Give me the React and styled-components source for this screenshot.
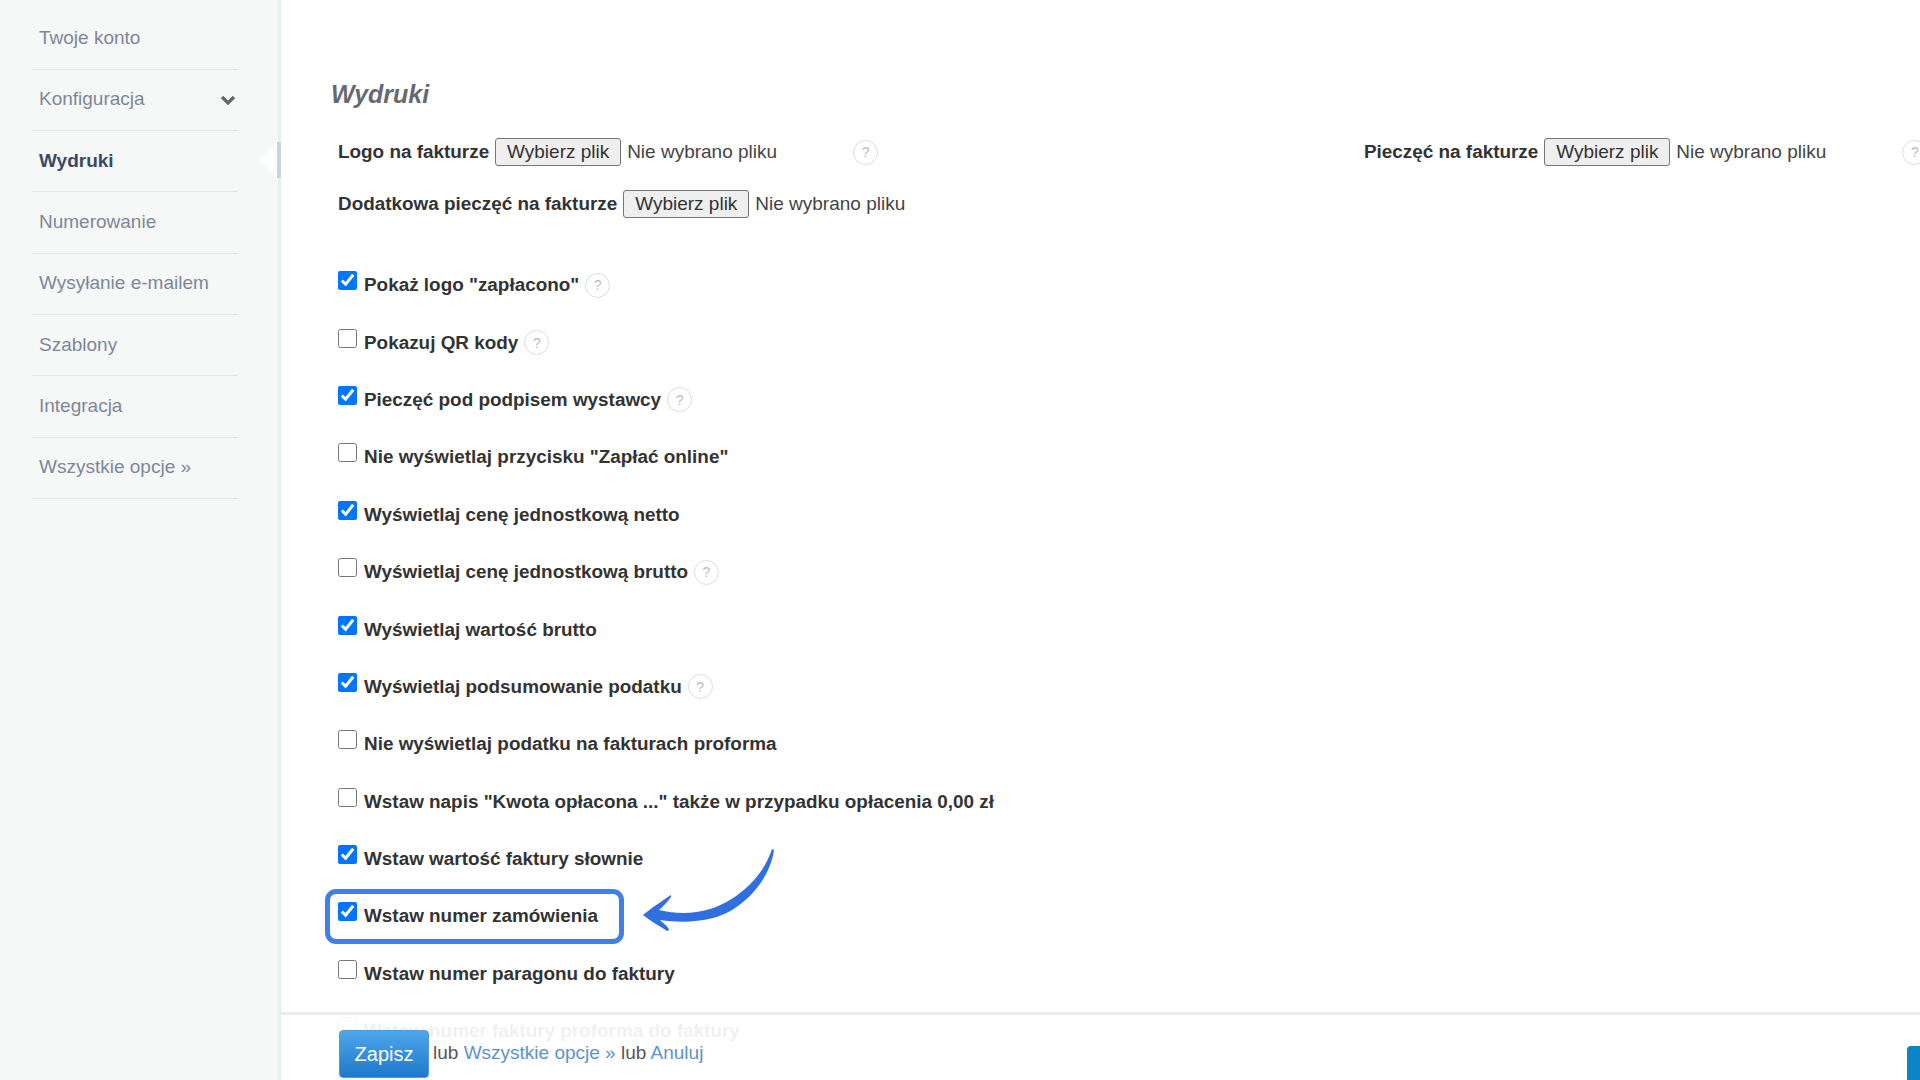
import styled, { createGlobalStyle } from 'styled-components';

const menuItems = [
    { label: 'Twoje konto' },
    { label: 'Konfiguracja', expandable: true },
    { label: 'Wydruki', active: true },
    { label: 'Numerowanie' },
    { label: 'Wysyłanie e-mailem' },
    { label: 'Szablony' },
    { label: 'Integracja' },
    { label: 'Wszystkie opcje »' },
];

const options = [
    { label: 'Pokaż logo "zapłacono"', checked: true, help: true },
    { label: 'Pokazuj QR kody', help: true },
    { label: 'Pieczęć pod podpisem wystawcy', checked: true, help: true },
    { label: 'Nie wyświetlaj przycisku "Zapłać online"' },
    { label: 'Wyświetlaj cenę jednostkową netto', checked: true },
    { label: 'Wyświetlaj cenę jednostkową brutto', help: true },
    { label: 'Wyświetlaj wartość brutto', checked: true },
    { label: 'Wyświetlaj podsumowanie podatku', checked: true, help: true },
    { label: 'Nie wyświetlaj podatku na fakturach proforma' },
    { label: 'Wstaw napis "Kwota opłacona ..." także w przypadku opłacenia 0,00 zł' },
    { label: 'Wstaw wartość faktury słownie', checked: true },
    { label: 'Wstaw numer zamówienia', checked: true, marked: true },
    { label: 'Wstaw numer paragonu do faktury' },
    { label: 'Wstaw numer faktury proforma do faktury' },
];

function FileField({ label, help }) {
    return (
        <FileRow>
            <FileLabel>{label}</FileLabel>
            <FileButton type="button">Wybierz plik</FileButton>
            <FileName>Nie wybrano pliku</FileName>
            {help && <Help>?</Help>}
        </FileRow>
    );
}

function App() {
    return (
        <Page>
            <GlobalStyle />
            <Sidebar>
                {menuItems.map((item) => (
                    <MenuItem key={item.label} $active={item.active}>
                        {item.label}
                        {item.expandable && (
                            <Chevron viewBox="0 0 16 11">
                                <path d="M2 2l6 6 6-6" fill="none" stroke="#666" strokeWidth="3.2" />
                            </Chevron>
                        )}
                    </MenuItem>
                ))}
            </Sidebar>
            <Main>
                <Title>Wydruki</Title>
                <FileGrid>
                    <FileField label="Logo na fakturze" help />
                    <FileField label="Pieczęć na fakturze" help />
                    <FileField label="Dodatkowa pieczęć na fakturze" />
                </FileGrid>
                <Options>
                    {options.map((option) => (
                        <Option key={option.label} $marked={option.marked}>
                            <Check type="checkbox" defaultChecked={option.checked} />
                            <OptionLabel>{option.label}</OptionLabel>
                            {option.help && <OptionHelp>?</OptionHelp>}
                            {option.marked && (
                                <Arrow viewBox="0 0 140 90">
                                    <path
                                        d="M134 4L136 5C132 35 105 65 75 73C55 78 38 77 22 75C25 78 30 81 31 85L29 86C22 81 12 76 5 70C12 64 24 56 33 50L33 52C30 56 26 61 21 65C38 69 55 69 72 64C100 55 125 32 134 4Z"
                                        fill="#2f6fdf"
                                    />
                                </Arrow>
                            )}
                        </Option>
                    ))}
                </Options>
                <Footer>
                    <SaveButton type="button">Zapisz</SaveButton>
                    <FooterText>
                        lub <FooterLink>Wszystkie opcje »</FooterLink> lub <FooterLink>Anuluj</FooterLink>
                    </FooterText>
                    <CornerButton />
                </Footer>
            </Main>
        </Page>
    );
}

const GlobalStyle = createGlobalStyle`
    html, body {
        margin : 0;
        height : 100%;
        overflow : hidden;
        background-color : white;
        font-family : "Liberation Sans", Arial, sans-serif;
    }
`;

const Page = styled.div`
    display : flex;

    height : 1080px;
    overflow : hidden;
`;

const Sidebar = styled.nav`
    flex : none;
    box-sizing : border-box;

    width : 281px;
    padding-top : 8.5px;
    padding-left : 32px;
    padding-right : 40px;

    background-color : #f6f7f7;
    border-right : 3px solid #e9eeee;
`;

const MenuItem = styled.div`
    position : relative;
    display : flex;
    align-items : center;
    justify-content : space-between;
    box-sizing : border-box;

    height : 61.3px;
    padding-left : 7px;
    padding-bottom : 1px;

    font-size : 19px;
    font-weight : ${(props) => (props.$active ? 700 : 400)};
    color : ${(props) => (props.$active ? '#3a4a5e' : '#7d8799')};

    border-bottom : 1px solid #e3e5e6;

    ${(props) => props.$active && `
        &::before {
            content : "";
            position : absolute;
            top : 11px;
            right : -39px;

            border-top : 18px solid transparent;
            border-bottom : 18px solid transparent;
            border-right : 17px solid white;
        }

        &::after {
            content : "";
            position : absolute;
            top : 11px;
            right : -43px;

            width : 4px;
            height : 36px;

            background-color : #c6d6e1;
        }
    `}
`;

const Chevron = styled.svg`
    width : 16px;
    height : 11px;
    margin-top : 3px;
    margin-right : 2px;
`;

const Main = styled.main`
    position : relative;
    flex : 1;
    min-width : 0;

    padding-top : 80px;
    padding-left : 50px;
`;

const Title = styled.h1`
    margin : 0;

    font-size : 25px;
    line-height : 29px;
    font-weight : 700;
    font-style : italic;
    color : #666a70;
`;

const FileGrid = styled.div`
    display : grid;
    grid-template-columns : 1026px 1fr;
    row-gap : 24px;

    margin-top : 29px;
    padding-left : 7px;
`;

const FileRow = styled.div`
    display : flex;
    align-items : center;

    height : 28px;
    white-space : nowrap;
`;

const FileLabel = styled.span`
    font-size : 18.9px;
    font-weight : 700;
    color : #333;
`;

const FileButton = styled.button`
    box-sizing : border-box;

    width : 126px;
    height : 28px;
    margin-left : 6px;
    padding : 0;

    font-family : inherit;
    font-size : 19px;
    color : #333;

    background-color : #efefef;
    border : 1px solid #767676;
    border-radius : 3px;
`;

const FileName = styled.span`
    width : 226px;
    margin-left : 6px;

    font-size : 19px;
    color : #444;
`;

const Help = styled.span`
    flex : none;
    display : flex;
    align-items : center;
    justify-content : center;
    box-sizing : border-box;

    width : 25px;
    height : 25px;

    font-size : 14px;
    color : #bbb;

    border : 1px solid #ddd;
    border-radius : 50%;
`;

const Options = styled.div`
    display : grid;
    grid-auto-rows : 57.4px;
    align-items : center;

    margin-top : 38.5px;
    padding-left : 7px;
`;

const Option = styled.label`
    position : relative;
    display : flex;
    align-items : center;
    height : 100%;

    ${(props) => props.$marked && `
        &::after {
            content : "";
            position : absolute;
            top : 1px;
            left : -13px;
            box-sizing : border-box;

            width : 299px;
            height : 55px;

            border : 5px solid #3f7fe6;
            border-radius : 11px;
        }
    `}
`;

const Check = styled.input`
    flex : none;

    width : 19px;
    height : 19px;
    margin : 0;
    margin-top : -9px;

    accent-color : #0075ff;
`;

const OptionLabel = styled.span`
    margin-left : 7px;

    font-size : 18.9px;
    font-weight : 700;
    color : #333;
    white-space : nowrap;
`;

const OptionHelp = styled(Help)`
    margin-left : 6px;
`;

const Arrow = styled.svg`
    position : absolute;
    top : -43px;
    left : 300px;

    width : 140px;
    height : 90px;
`;

const Footer = styled.footer`
    position : absolute;
    top : 1012px;
    left : 0;
    right : 0;
    display : flex;
    align-items : flex-start;
    box-sizing : border-box;

    height : 68px;
    padding-left : 58px;
    padding-top : 15px;

    background-color : rgba(255, 255, 255, 0.93);
    border-top : 3px solid #ececec;
`;

const SaveButton = styled.button`
    width : 90px;
    height : 48px;
    padding : 0;

    font-family : inherit;
    font-size : 20px;
    color : white;

    background-image : linear-gradient(#4fa6ea, #1f78cb);
    border : 1px solid #4d9ce0;
    border-radius : 4px;
`;

const FooterText = styled.span`
    margin-left : 4px;
    margin-top : 12px;

    font-size : 19px;
    color : #555;
`;

const FooterLink = styled.a`
    color : #5d93c9;
`;

const CornerButton = styled.div`
    position : absolute;
    top : 31px;
    right : 0;

    width : 13px;
    height : 34px;

    background-color : #0b84c6;
    border-top-left-radius : 4px;
`;

export default App;
